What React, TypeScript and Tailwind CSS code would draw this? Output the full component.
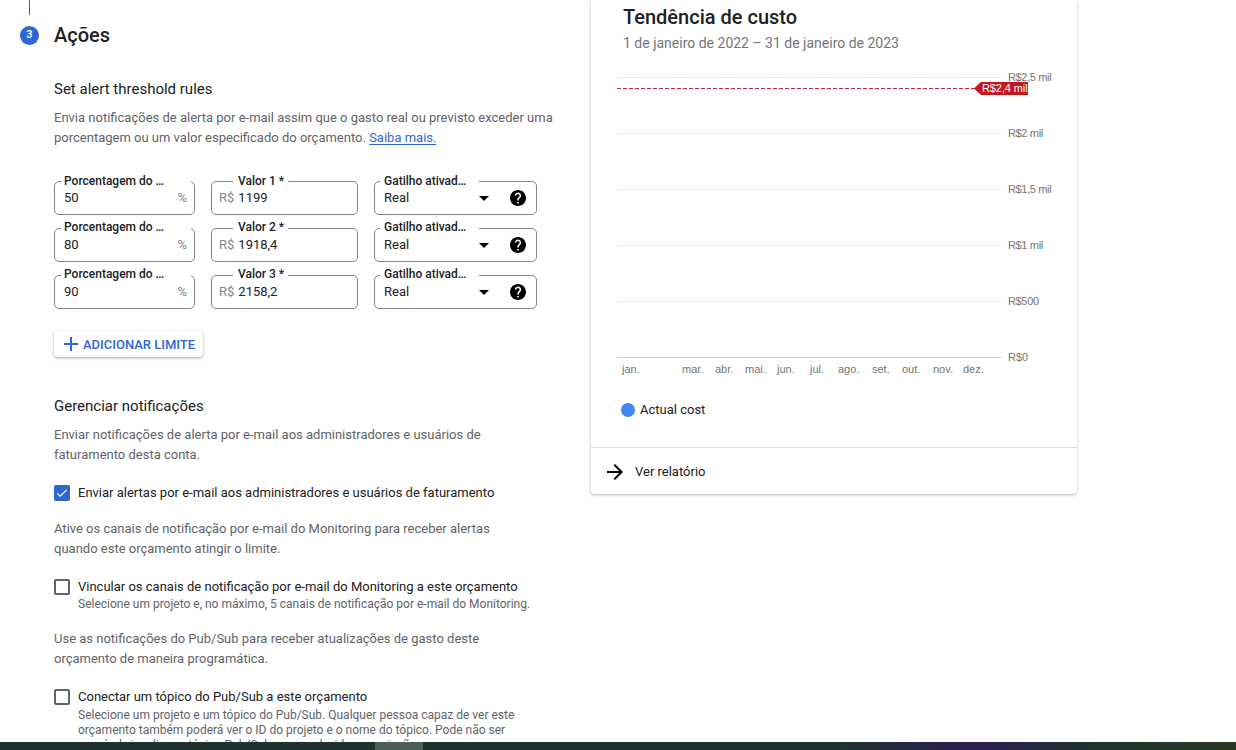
import React from 'react';

const font = { fontFamily: 'Roboto, sans-serif' };

function HelpIcon() {
  return (
    <svg width="16" height="16" viewBox="2 2 20 20" fill="#000">
      <path d="M12 2C6.48 2 2 6.48 2 12s4.48 10 10 10 10-4.48 10-10S17.52 2 12 2zm1 17h-2v-2h2v2zm2.07-7.75l-.9.92C13.45 12.9 13 13.5 13 15h-2v-.5c0-1.1.45-2.1 1.17-2.83l1.24-1.26c.37-.36.59-.86.59-1.41 0-1.1-.9-2-2-2s-2 .9-2 2H8c0-2.21 1.79-4 4-4s4 1.79 4 4c0 .88-.36 1.68-.93 2.25z" />
    </svg>
  );
}

function Field({ label, labelClass, notch, children, className }: { label: string; labelClass: string; notch: string; children: React.ReactNode; className: string }) {
  return (
    <div className={`relative h-[34px] rounded-[5px] border border-[#80868b] flex items-center ${className}`}>
      <div className={`absolute top-[-8px] h-[12px] bg-white ${notch}`} />
      <span className={`absolute text-[12px] leading-[14px] font-medium text-[#202124] whitespace-nowrap ${labelClass}`}>{label}</span>
      {children}
    </div>
  );
}

function ThresholdRow({ pct, n, value }: { pct: string; n: number; value: string }) {
  // first row's labels sit a pixel lower than the other two in the reference
  const top = n === 1 ? 'top-[-8px]' : 'top-[-9px]';
  return (
    <div className="flex gap-4 h-[34px]">
      <Field label="Porcentagem do …" labelClass={`left-[9px] ${top}`} notch="left-[6px] w-[130px]" className="w-[141px]">
        <span className="pl-[9px] text-[13px] text-[#202124]">{pct}</span>
        <span className="ml-auto pr-[7px] text-[13px] text-[#80868b]">%</span>
      </Field>
      <Field label={`Valor ${n} *`} labelClass={`left-[26px] ${top}`} notch="left-[21px] w-[55px]" className="w-[147px]">
        <span className="pl-[7px] pr-[4px] text-[13px] text-[#80868b]">R$</span>
        <span className="text-[13px] text-[#202124]">{value}</span>
      </Field>
      <Field label="Gatilho ativad…" labelClass={`left-[9px] ${top}`} notch="left-[5px] w-[99px]" className="w-[163px]">
        <span className="w-[104px] shrink-0 pl-[9px] text-[13px] text-[#202124]">Real</span>
        <svg width="10" height="5" viewBox="0 0 10 5"><path d="M0 0h10L5 5z" fill="#000" /></svg>
        <span className="ml-[21px] flex"><HelpIcon /></span>
      </Field>
    </div>
  );
}

function Check({ checked }: { checked?: boolean }) {
  if (checked) {
    return (
      <span className="w-4 h-4 rounded-[2px] bg-[#2f66d0] flex items-center justify-center shrink-0">
        <svg width="14" height="14" viewBox="0 0 24 24" fill="none" stroke="#fff" strokeWidth="2"><path d="M4 12.5l5 5L20 6.5" /></svg>
      </span>
    );
  }
  return <span className="w-4 h-4 rounded-[2px] border-2 border-[#5f6368] shrink-0" />;
}

function TrendChart() {
  const grid = [
    { y: 77, label: 'R$2,5 mil' },
    { y: 133, label: 'R$2 mil' },
    { y: 189, label: 'R$1,5 mil' },
    { y: 245, label: 'R$1 mil' },
    { y: 301, label: 'R$500' },
  ];
  const months: [string, number][] = [
    ['jan.', 622], ['mar.', 682], ['abr.', 715], ['mai.', 745], ['jun.', 777], ['jul.', 810],
    ['ago.', 838], ['set.', 872], ['out.', 902], ['nov.', 933], ['dez.', 963],
  ];
  const f = { fontFamily: '"Liberation Sans", Arial, sans-serif', fontSize: 11 };
  // svg coordinates follow the page, card starts at x=591
  return (
    <svg width="486" height="320" viewBox="591 60 486 320" className="block">
      {grid.map((g) => (
        <g key={g.y}>
          <line x1="617" x2="1001" y1={g.y + 0.5} y2={g.y + 0.5} stroke="#ebebeb" />
          <text x="1008" y={g.y + 4} fill="#757575" letterSpacing="-0.35" style={f}>{g.label}</text>
        </g>
      ))}
      <line x1="617" x2="1001" y1="357.5" y2="357.5" stroke="#cccccc" />
      <text x="1008" y="361" fill="#757575" style={f}>R$0</text>
      {months.map(([m, x]) => (
        <text key={m} x={x} y="373" fill="#757575" style={f}>{m}</text>
      ))}
      <line x1="617" x2="975" y1="88.5" y2="88.5" stroke="#b5283f" strokeDasharray="4 2" />
      <path d="M974 88.5L981 82H1028V95H981z" fill="#c5161d" />
      <text x="982" y="92" fill="#fff" letterSpacing="-0.1" style={f}>R$2,4 mil</text>
    </svg>
  );
}

export default function App() {
  return (
    <div className="h-[750px] w-[1236px] overflow-hidden bg-white flex flex-col" style={font}>
      <div className="h-[742px] overflow-hidden flex">
        <div className="w-[591px] shrink-0 flex">
          <div className="w-[54px] shrink-0 relative">
            <div className="absolute left-[29px] top-0 h-[15px] w-px bg-[#5f6368]" />
            <div className="absolute left-[20px] top-[26px] w-[19px] h-[19px] rounded-full bg-[#2f66d0] text-white text-[11px] font-medium flex items-center justify-center">3</div>
          </div>
          <div className="flex-1 pt-[23px]">
            <h2 className="text-[20px] leading-[24px] font-medium text-[#202124]">Ações</h2>

            <h3 className="mt-[32px] text-[15px] leading-[20px] text-[#202124]">Set alert threshold rules</h3>
            <p className="mt-[9px] w-[510px] text-[13px] leading-[20px] text-[#5f6368]">
              Envia notificações de alerta por e-mail assim que o gasto real ou previsto exceder uma porcentagem ou um valor especificado do orçamento.{' '}
              <span className="text-[#2f66d0] underline underline-offset-2">Saiba mais.</span>
            </p>

            <div className="mt-[33px] flex flex-col gap-[13px]">
              <ThresholdRow pct="50" n={1} value="1199" />
              <ThresholdRow pct="80" n={2} value="1918,4" />
              <ThresholdRow pct="90" n={3} value="2158,2" />
            </div>

            <button className="mt-[22px] h-[26px] w-[149px] rounded-[4px] bg-white shadow-[0_1px_3px_rgba(60,64,67,0.45)] flex items-center text-[#2f66d0] text-[13px] font-medium">
              <svg className="ml-[5px]" width="24" height="24" viewBox="0 0 24 24" fill="#2f66d0"><path d="M19 13h-6v6h-2v-6H5v-2h6V5h2v6h6v2z" /></svg>
              <span className="pt-[1px]">ADICIONAR LIMITE</span>
            </button>

            <h3 className="mt-[39px] text-[15px] leading-[20px] text-[#202124]">Gerenciar notificações</h3>
            <p className="mt-[9px] w-[450px] text-[13px] leading-[20px] text-[#5f6368]">
              Enviar notificações de alerta por e-mail aos administradores e usuários de faturamento desta conta.
            </p>

            <label className="mt-[18px] flex items-center gap-2 h-[20px]">
              <Check checked />
              <span className="text-[13px] text-[#202124]">Enviar alertas por e-mail aos administradores e usuários de faturamento</span>
            </label>

            <p className="mt-[16px] w-[450px] text-[13px] leading-[20px] text-[#5f6368]">
              Ative os canais de notificação por e-mail do Monitoring para receber alertas quando este orçamento atingir o limite.
            </p>

            <label className="mt-[18px] flex items-center gap-2 h-[20px]">
              <Check />
              <span className="text-[13px] text-[#202124]">Vincular os canais de notificação por e-mail do Monitoring a este orçamento</span>
            </label>
            <p className="ml-[24px] text-[12px] leading-[15px] text-[#5f6368]">Selecione um projeto e, no máximo, 5 canais de notificação por e-mail do Monitoring.</p>

            <p className="mt-[17px] w-[450px] text-[13px] leading-[20px] text-[#5f6368]">
              Use as notificações do Pub/Sub para receber atualizações de gasto deste orçamento de maneira programática.
            </p>

            <label className="mt-[18px] flex items-center gap-2 h-[20px]">
              <Check />
              <span className="text-[13px] text-[#202124]">Conectar um tópico do Pub/Sub a este orçamento</span>
            </label>
            <p className="ml-[24px] mt-[1px] w-[450px] text-[12px] leading-[15px] text-[#5f6368]">
              Selecione um projeto e um tópico do Pub/Sub. Qualquer pessoa capaz de ver este orçamento também poderá ver o ID do projeto e o nome do tópico. Pode não ser possível visualizar o tópico Pub/Sub sem as devidas permissões.
            </p>
          </div>
        </div>

        <div className="w-[486px] h-[494px] shrink-0 rounded-b-[4px] bg-white shadow-[0_1px_3px_rgba(60,64,67,0.4)] flex flex-col">
          <div className="pl-[32px] pt-[5px]">
            <h2 className="text-[20px] leading-[24px] font-medium text-[#202124]">Tendência de custo</h2>
            <p className="mt-[4px] text-[14px] leading-[20px] text-[#757575]">1 de janeiro de 2022 – 31 de janeiro de 2023</p>
          </div>
          <div className="mt-[7px]"><TrendChart /></div>
          <div className="mt-[20px] ml-[30px] flex items-center gap-[5px] h-[20px]">
            <span className="w-[14px] h-[14px] rounded-full bg-[#4285f4]" />
            <span className="text-[13px] text-[#202124]">Actual cost</span>
          </div>
          <div className="mt-auto h-[47px] border-t border-[#e0e0e0] flex items-center pl-[12px] pt-[1px]">
            <svg width="24" height="24" viewBox="0 0 24 24" fill="#000"><path d="M12 4l-1.41 1.41L16.17 11H4v2h12.17l-5.58 5.59L12 20l8-8z" /></svg>
            <span className="ml-[8px] text-[13px] text-[#202124]">Ver relatório</span>
          </div>
        </div>
      </div>

      <div className="h-[8px] bg-[linear-gradient(90deg,#1f3430_0%,#1f3430_68%,#2a1f50_78%,#2a1f50_80%,#1f3430_88%,#263a20_100%)] flex">
        <div className="ml-[375px] w-[48px] h-full bg-[#4a5f58]" />
      </div>
    </div>
  );
}
